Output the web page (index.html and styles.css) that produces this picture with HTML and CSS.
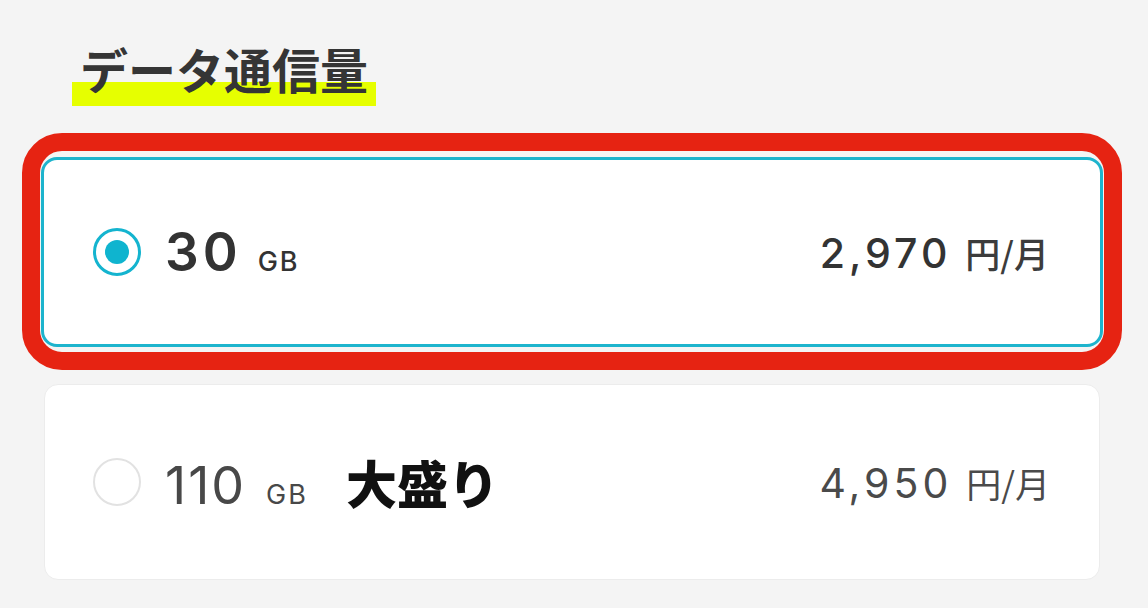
FILE: index.html
```html
<!DOCTYPE html>
<html lang="ja">
<head>
<meta charset="utf-8">
<title>データ通信量</title>
<link rel="stylesheet" href="styles.css">
</head>
<body>
<div class="page">
  <h2 class="title"><span class="title-text">データ通信量</span></h2>
  <div class="plans">
    <label class="plan plan-selected">
      <span class="plan-left">
        <span class="radio radio-on"><span class="radio-dot"></span></span>
        <span class="amount">
          <span class="gb-num">30</span><span class="gb-unit">GB</span>
        </span>
      </span>
      <span class="price">
        <span class="price-num">2,970</span><span class="price-unit">円/月</span>
      </span>
    </label>
    <label class="plan">
      <span class="plan-left">
        <span class="radio"></span>
        <span class="amount amount-light">
          <span class="gb-num">110</span><span class="gb-unit">GB</span><span class="tag">大盛り</span>
        </span>
      </span>
      <span class="price price-light">
        <span class="price-num">4,950</span><span class="price-unit">円/月</span>
      </span>
    </label>
    <div class="annotation"></div>
  </div>
</div>
</body>
</html>
```

FILE: styles.css
```css
html, body {
  margin: 0;
  padding: 0;
  background: #f4f4f4;
}

body {
  width: 1148px;
  height: 608px;
  overflow: hidden;
  font-family: Inter, "Noto Sans CJK JP", sans-serif;
  color: #333;
}

.page {
  padding: 44px 48px 0 44px;
}

.title {
  margin: 0 0 0 28px;
  font-size: 48px;
  line-height: 48px;
  font-weight: 700;
}

.title-text {
  display: inline-block;
  font-family: "Noto Sans CJK JP", sans-serif;
  color: #353535;
  padding: 0 8px 14px 8px;
  background: linear-gradient(to bottom, transparent 38px, #e6ff00 38px);
}

.plans {
  position: relative;
  margin-top: 51px;
  display: flex;
  flex-direction: column;
  gap: 37px;
}

.plan {
  display: flex;
  align-items: center;
  justify-content: space-between;
  box-sizing: border-box;
  height: 196px;
  background: #fff;
  border: 1px solid #ececec;
  border-radius: 14px;
  padding: 0 49px 0 48px;
}

.plan-selected {
  height: 190px;
  margin: 0 -3px;
  border: 3px solid #1db4cd;
  border-radius: 16px;
  padding: 0 51px 0 49px;
}

.plan-left {
  display: flex;
  align-items: center;
}

.radio {
  box-sizing: border-box;
  width: 48px;
  height: 48px;
  border-radius: 50%;
  border: 2px solid #e2e2e2;
  display: flex;
  align-items: center;
  justify-content: center;
  flex: none;
}

.radio-on {
  border: 3px solid #14b4cf;
}

.radio-dot {
  width: 24px;
  height: 24px;
  border-radius: 50%;
  background: #0fb4cf;
}

.amount {
  margin-left: 24px;
  display: flex;
  align-items: baseline;
  color: #333;
}

.gb-num {
  font-size: 53px;
  font-weight: 600;
  letter-spacing: 4px;
}

.gb-unit {
  font-size: 27px;
  font-weight: 500;
  margin-left: 16px;
  letter-spacing: 2px;
}

.amount-light {
  color: #484848;
}

.amount-light .gb-num {
  font-size: 52px;
  font-weight: 400;
  letter-spacing: 2px;
}

.amount-light .gb-unit {
  font-weight: 400;
  margin-left: 20px;
}

.tag {
  font-family: "Noto Sans CJK JP", sans-serif;
  font-weight: 900;
  font-size: 51px;
  color: #111;
  margin-left: 38px;
}

.price {
  display: flex;
  align-items: baseline;
  color: #333;
}

.price-num {
  font-size: 41px;
  font-weight: 500;
  letter-spacing: 4px;
}

.price-unit {
  font-family: "Noto Sans CJK JP", sans-serif;
  font-size: 35px;
  font-weight: 500;
  margin-left: 14px;
  color: #3c3c3c;
}

.price-light {
  color: #4a4a4a;
}

.price-light .price-num {
  font-weight: 400;
}

.price-light .price-unit {
  font-weight: 400;
  color: #4a4a4a;
}

.annotation {
  position: absolute;
  left: -22px;
  top: -24px;
  width: 1100px;
  height: 237px;
  box-sizing: border-box;
  border: 18px solid #e62312;
  border-radius: 40px;
  pointer-events: none;
}
```
